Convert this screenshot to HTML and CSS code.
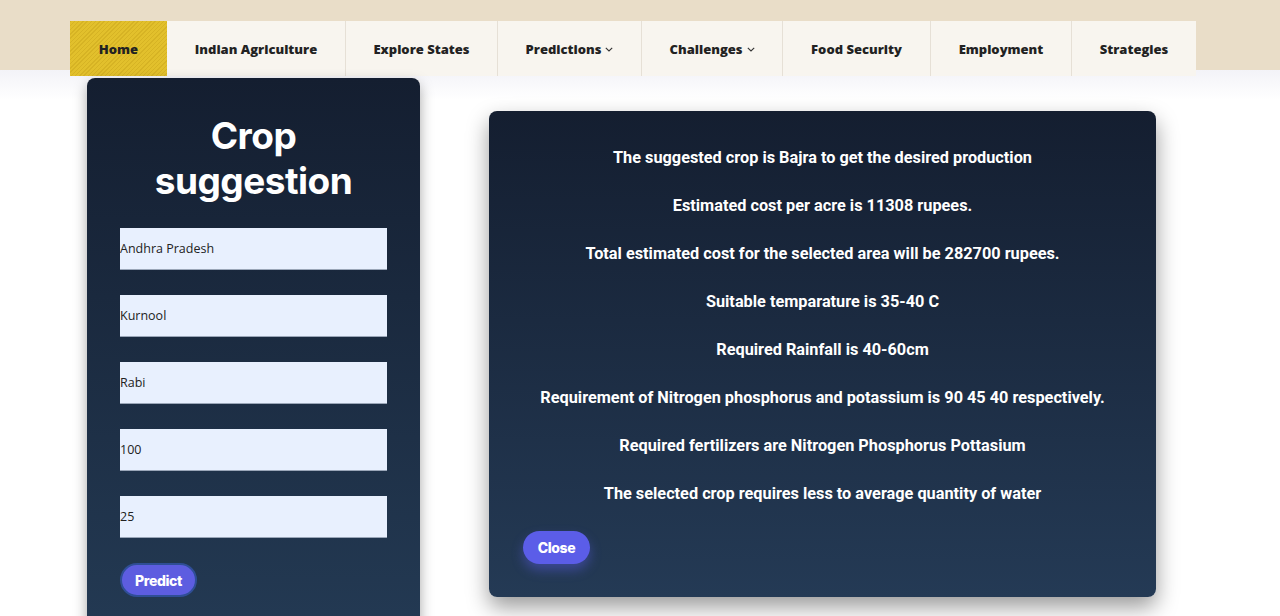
FILE: index.html
```html
<!DOCTYPE html>
<html lang="en">
<head>
<meta charset="utf-8">
<title>Crop suggestion</title>
<link rel="stylesheet" href="styles.css">
</head>
<body>
<header class="topbar">
  <nav class="nav">
    <a class="nav-item active" href="#">Home</a>
    <a class="nav-item" href="#">Indian Agriculture</a>
    <a class="nav-item" href="#">Explore States</a>
    <a class="nav-item" href="#">Predictions <span class="caret"><svg width="8" height="5" viewBox="0 0 8 5"><path d="M0.8 0.8 L4 4 L7.2 0.8" fill="none" stroke="#333" stroke-width="1.1"/></svg></span></a>
    <a class="nav-item" href="#">Challenges <span class="caret"><svg width="8" height="5" viewBox="0 0 8 5"><path d="M0.8 0.8 L4 4 L7.2 0.8" fill="none" stroke="#333" stroke-width="1.1"/></svg></span></a>
    <a class="nav-item" href="#">Food Security</a>
    <a class="nav-item" href="#">Employment</a>
    <a class="nav-item" href="#">Strategies</a>
  </nav>
</header>
<main class="main">
  <section class="card">
    <h1 class="title">Crop<br>suggestion</h1>
    <form class="form">
      <input class="field" type="text" value="Andhra Pradesh">
      <input class="field" type="text" value="Kurnool">
      <input class="field" type="text" value="Rabi">
      <input class="field" type="text" value="100">
      <input class="field" type="text" value="25">
      <button class="btn btn-predict" type="button">Predict</button>
    </form>
  </section>
  <section class="modal">
    <p class="line">The suggested crop is Bajra to get the desired production</p>
    <p class="line">Estimated cost per acre is 11308 rupees.</p>
    <p class="line">Total estimated cost for the selected area will be 282700 rupees.</p>
    <p class="line">Suitable temparature is 35-40 C</p>
    <p class="line">Required Rainfall is 40-60cm</p>
    <p class="line">Requirement of Nitrogen phosphorus and potassium is 90 45 40 respectively.</p>
    <p class="line">Required fertilizers are Nitrogen Phosphorus Pottasium</p>
    <p class="line">The selected crop requires less to average quantity of water</p>
    <div class="actions"><button class="btn btn-close" type="button">Close</button></div>
  </section>
</main>
</body>
</html>
```
FILE: styles.css
```css
* { box-sizing: border-box; }
html, body { margin: 0; padding: 0; }
body {
  background: linear-gradient(#f3f3f8 70px, #ffffff 100px);
  font-family: "Open Sans", "Noto Sans", sans-serif;
  min-height: 760px;
}
.topbar {
  height: 70px;
  background: #e9ddc8;
  padding: 21px 0 0 70px;
}
.nav {
  display: flex;
  height: 55px;
  width: 1126px;
  background: #f8f5ef;
}
.nav-item {
  display: flex;
  align-items: center;
  justify-content: center;
  gap: 4px;
  height: 55px;
  color: #222222;
  text-decoration: none;
  font-family: "Open Sans", sans-serif;
  font-weight: 800;
  font-size: 13px;
  border-left: 1px solid #e6e0d6;
}
.nav-item:nth-child(1) { width: 97px; border-left: none; }
.nav-item:nth-child(2) { width: 178px; border-left: none; }
.nav-item:nth-child(3) { width: 152px; }
.nav-item:nth-child(4) { width: 144px; }
.nav-item:nth-child(5) { width: 141px; }
.nav-item:nth-child(6) { width: 148px; }
.nav-item:nth-child(7) { width: 141px; }
.nav-item:nth-child(8) { width: 125px; }
.nav-item.active {
  background-color: #e2c02c;
  background-image: repeating-linear-gradient(135deg, rgba(160,120,0,0.18) 0 1px, rgba(255,255,255,0) 1px 3px);
}
.caret { display: inline-flex; margin-top: 2px; }
.main {
  display: flex;
  align-items: flex-start;
  gap: 69px;
  padding: 8px 0 0 87px;
}
.card {
  width: 333px;
  border-radius: 8px;
  background: linear-gradient(#141e30, #243b55);
  box-shadow: 0 6px 14px rgba(0,0,0,0.35);
  padding: 35px 33px 60px;
}
.title {
  margin: 0 0 25px;
  text-align: center;
  color: #ffffff;
  font-family: Inter, sans-serif;
  font-weight: 700;
  font-size: 37px;
  line-height: 45px;
  letter-spacing: -0.5px;
}
.form {
  display: flex;
  flex-direction: column;
  align-items: flex-start;
  gap: 25px;
}
.field {
  width: 267px;
  height: 42px;
  border: none;
  border-bottom: 1px solid #9aa6b8;
  background: #e8f0fe;
  padding: 0;
  font-family: "Open Sans", "Noto Sans", sans-serif;
  font-size: 12.5px;
  color: #222;
  outline: none;
}
.btn {
  border-radius: 18px;
  color: #ffffff;
  font-family: Inter, sans-serif;
  font-weight: 800;
  font-size: 14px;
  letter-spacing: -0.4px;
  cursor: pointer;
}
.btn-predict {
  width: 77px;
  height: 34px;
  background: #5d5de0;
  border: 2px solid #2f4e96;
}
.modal {
  width: 667px;
  margin-top: 33px;
  border-radius: 8px;
  background: linear-gradient(#141e30, #243a55);
  box-shadow: 0 10px 22px rgba(0,0,0,0.4);
  padding: 36px 34px 33px;
  text-align: center;
}
.line {
  margin: 0 0 26px;
  color: #ffffff;
  font-family: Roboto, sans-serif;
  font-weight: 700;
  font-size: 16.3px;
  line-height: 22px;
}
.actions { display: flex; justify-content: flex-start; }
.btn-close {
  width: 67px;
  height: 33px;
  border: none;
  background: #5b5de8;
  box-shadow: 0 6px 12px rgba(91,93,232,0.45);
}
```
